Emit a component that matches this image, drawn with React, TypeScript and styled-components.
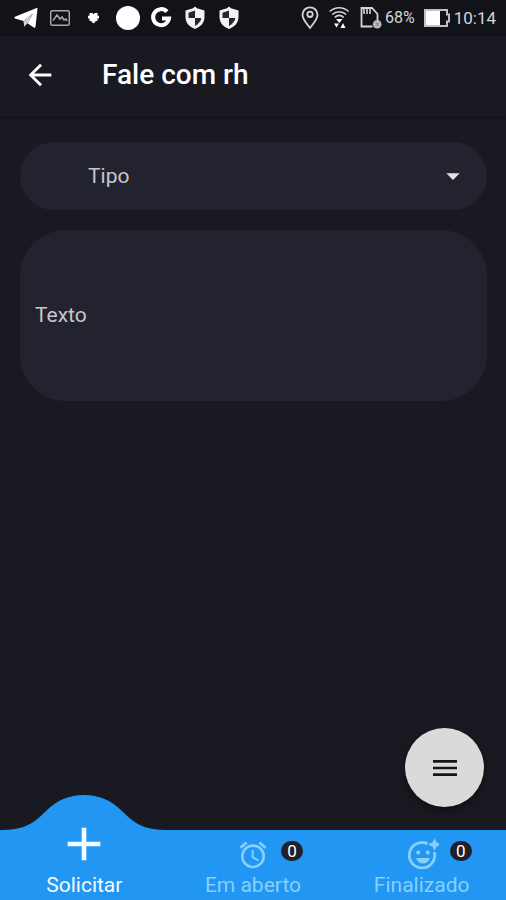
import React, { useState } from "react";
import styled, { createGlobalStyle } from "styled-components";
import { MdAdd, MdAlarm, MdArrowBack, MdArrowDropDown, MdMenu } from "react-icons/md";

const colors = {
  page: "#191922",
  status: "#121219",
  field: "#23232f",
  hint: "#c6c6cc",
  blue: "#2196f3",
  idle: "#86d0fb",
  active: "#f4fbff",
  fab: "#dadada",
};

const GlobalStyle = createGlobalStyle`
  *, *::before, *::after { box-sizing: border-box; }
  body { margin: 0; background: ${colors.page}; font-family: Roboto, "Liberation Sans", sans-serif; }
  button, select, textarea { font: inherit; border: 0; margin: 0; }
`;

const Screen = styled.div`
  min-height: 100vh;
  display: flex;
  flex-direction: column;
  background: ${colors.page};
`;

const StatusBar = styled.div`
  height: 36px;
  padding: 0 10px 0 14px;
  display: flex;
  align-items: center;
  justify-content: space-between;
  background: ${colors.status};
  color: #fff;
`;

const Notifications = styled.div`
  display: flex;
  align-items: center;
  gap: 10px;

  > svg { display: block; width: 24px; height: 24px; }
`;

const SystemInfo = styled.div`
  display: flex;
  align-items: center;
  color: #d4d4d8;
  font-size: 16px;
  line-height: 20px;

  > svg { display: block; flex: none; }
`;

const Percent = styled.span`
  margin: 0 9px 0 3px;
`;

const Clock = styled.time`
  margin-left: 4px;
  font-size: 17px;
`;

const PinSlot = styled.svg`
  margin-right: 8px;
`;

const WifiSlot = styled.svg`
  margin-right: 9px;
`;

const Header = styled.header`
  height: 80px;
  padding: 0 20px 2px;
  display: flex;
  align-items: center;
  gap: 42px;
  background: ${colors.page};
  box-shadow: 0 2px 5px rgba(0, 0, 0, 0.3);
`;

const BackButton = styled.button`
  width: 40px;
  height: 40px;
  padding: 0;
  display: grid;
  place-items: center;
  background: none;
  color: #fff;
  font-size: 34px;
`;

const Title = styled.h1`
  margin: 0;
  color: #fff;
  font-size: 28px;
  font-weight: 500;
  line-height: 36px;
`;

const Form = styled.form`
  flex: 1;
  padding: 26px 19px 24px 20px;
  display: flex;
  flex-direction: column;
  gap: 20px;
`;

const SelectField = styled.div`
  display: grid;
  align-items: center;
  color: #e2e2e4;

  > select, > svg { grid-area: 1 / 1; }
  > svg { justify-self: end; margin-right: 18px; pointer-events: none; }
`;

const Select = styled.select`
  width: 100%;
  height: 68px;
  padding: 0 60px 0 68px;
  appearance: none;
  border-radius: 34px;
  background: ${colors.field};
  color: ${colors.hint};
  font-size: 21px;
`;

const TextArea = styled.textarea`
  width: 100%;
  height: 171px;
  padding: 72px 15px 12px;
  resize: none;
  border-radius: 46px;
  background: ${colors.field};
  color: ${colors.hint};
  font-size: 21px;
  line-height: 26px;

  &::placeholder { color: ${colors.hint}; opacity: 1; }
`;

const Fab = styled.button`
  align-self: flex-end;
  width: 79px;
  height: 79px;
  margin: 0 22px 23px 0;
  padding: 0;
  display: grid;
  place-items: center;
  border-radius: 50%;
  background: ${colors.fab};
  color: #151518;
  font-size: 32px;
  box-shadow: 0 3px 7px rgba(0, 0, 0, 0.5);
`;

const TabBar = styled.nav`
  display: grid;
  grid-template-columns: repeat(3, 1fr);
  height: 70px;
  background: ${colors.blue};
`;

const Tab = styled.button<{ $active: boolean }>`
  position: relative;
  padding: 0 0 3px;
  display: flex;
  flex-direction: column;
  align-items: center;
  justify-content: flex-end;
  background: none;
  color: ${({ $active }) => ($active ? colors.active : colors.idle)};
  font-size: 21px;
  line-height: 24px;
`;

const Hump = styled.svg`
  position: absolute;
  left: 50%;
  bottom: 100%;
  width: 168px;
  height: 36px;
  margin: 0 0 -1px -84px;
  display: block;
`;

const TabIcon = styled.span<{ $large?: boolean }>`
  position: relative;
  display: grid;
  place-items: center;
  width: 56px;
  height: ${({ $large }) => ($large ? 56 : 34)}px;
  margin-top: ${({ $large }) => ($large ? -14 : 0)}px;
  font-size: ${({ $large }) => ($large ? 56 : 32)}px;
  margin-bottom: 1px;
`;

const Badge = styled.span`
  position: absolute;
  left: 56px;
  top: 3px;
  width: 22px;
  height: 20px;
  border-radius: 10px;
  background: #20202c;
  color: #fff;
  font-size: 17px;
  line-height: 20px;
  text-align: center;
`;

const TelegramIcon = () => (
  <svg viewBox="0 0 24 24" fill="#fff">
    <path d="M23.500 2.500 21.500 20.500c-.2 1.400-1.200 1.500-2.200.8L13.500 17.300 19 7.500 9.500 15 1 12.500C0 12.200 0 11.200 1 10.800L22 2.300c1-.4 1.600-.3 1.500.2Z" />
    <path d="M9.500 15 19 7.500 13.500 17.300 10.200 20.800Z" fill="#d0d0d4" />
  </svg>
);

const PictureIcon = () => (
  <svg viewBox="0 0 24 24" fill="none" stroke="#a9a9ad" strokeWidth="1.500">
    <rect x="2.700" y="4.700" width="18.600" height="14.600" rx="1.600" />
    <path d="M5 14.500 9 9l3 4 2-2 2 3 2-1 1 2" />
  </svg>
);

const PuzzleIcon = () => (
  <svg viewBox="0 0 24 24" fill="#fff">
    <path d="M7.500 7h3l1 1.500L12.500 7h3v2.800H17v2.700h-1.500v2.500h-1.500L11.500 17.500 9 15H7.500v-2.500H6V9.800h1.500Z" />
  </svg>
);

const DiscIcon = () => (
  <svg viewBox="0 0 24 24">
    <circle cx="12" cy="12" r="12" fill="#fff" />
  </svg>
);

const GIcon = () => (
  <svg viewBox="0 0 24 24" fill="none" stroke="#fff" strokeWidth="4">
    <path d="M17 5.700A8 8 0 1 0 19 12.500h-7" />
  </svg>
);

const ShieldIcon = () => (
  <svg viewBox="0 0 24 24">
    <path d="M11 .5 13 2.200 20.500 4.500V11c0 5.800-3.800 9.900-9.500 12C5.300 20.900 1.500 16.800 1.500 11V4.500L9 2.200Z" fill="#f2f2f2" />
    <path d="M11 4.500V12H4.500V6.700ZM11 12h6.300c-.5 3.500-2.900 6.200-6.300 7.900Z" fill="#26262e" />
  </svg>
);

const PinIcon = () => (
  <PinSlot width="20" height="24" viewBox="0 0 20 24" fill="none" stroke="currentColor" strokeWidth="1.800">
    <path d="M9 22C5.800 17.800 1.500 13.400 1.500 8.800a7.500 7.500 0 0 1 15 0C16.500 13.400 12.200 17.800 9 22Z" />
    <circle cx="9" cy="8.300" r="2.700" />
  </PinSlot>
);

const WifiIcon = () => (
  <WifiSlot width="22" height="24" viewBox="0 0 22 24" fill="none" stroke="currentColor" strokeWidth="1.600">
    <path d="M.7 5.500C6.200.5 14.200.5 19.700 5.500M3.200 8.500C7.200 4.800 13.200 4.800 17.200 8.500M5.700 11.300c2.700-2.400 6.300-2.400 9 0" />
    <path d="M7 13h6.500l-3.200 4ZM5 17.500h5l-2.500 4ZM14 17l2.500 5h-5Z" fill="#fff" stroke="none" />
  </WifiSlot>
);

const SimIcon = () => (
  <svg width="22" height="24" viewBox="0 0 22 24" fill="none" stroke="currentColor" strokeWidth="1.800">
    <path d="M12.500 20.500H1.500V2h10.500l5.500 6v6" />
    <path d="M4 2v6M7 2v6M10 2v6" strokeWidth="1.600" />
    <circle cx="17.200" cy="18.200" r="4.300" fill="#b9b9be" stroke="none" />
    <path d="m15.500 16.500 3.400 3.400m0-3.400-3.400 3.400" stroke="#7c7c84" strokeWidth="1" />
  </svg>
);

const BatteryIcon = () => (
  <svg width="26" height="18" viewBox="0 0 26 18">
    <path d="M1 1h22v4.500h2v7h-2V17H1Z" fill="none" stroke="#c0c0c5" strokeWidth="2" />
    <path d="M2 2H16v14H2Z" fill="#fff" />
  </svg>
);

const ReactionIcon = () => (
  <svg width="34" height="34" viewBox="0 0 34 34" fill="none" stroke="currentColor" strokeWidth="2.800">
    <path d="M22.500 5.800A12.700 12.700 0 1 0 29.300 14" />
    <path d="M11 20h14c-1 3.500-3.600 5.500-7 5.500s-6-2-7-5.500Z" fill="currentColor" stroke="none" />
    <circle cx="13.300" cy="14.500" r="2.100" fill="currentColor" stroke="none" />
    <circle cx="22.700" cy="14.500" r="2.100" fill="currentColor" stroke="none" />
    <path d="m29.500 2 1.500 3 3 1.500-3 1.500-1.500 3-1.500-3-3-1.500 3-1.500Z" fill="currentColor" strokeWidth="1.600" />
  </svg>
);

const tabs = [
  { label: "Solicitar", icon: <MdAdd /> },
  { label: "Em aberto", icon: <MdAlarm />, count: 0 },
  { label: "Finalizado", icon: <ReactionIcon />, count: 0 },
];

export default function App() {
  const [active, setActive] = useState(0);
  const [text, setText] = useState("");

  return (
    <Screen>
      <GlobalStyle />
      <StatusBar>
        <Notifications>
          <TelegramIcon />
          <PictureIcon />
          <PuzzleIcon />
          <DiscIcon />
          <GIcon />
          <ShieldIcon />
          <ShieldIcon />
        </Notifications>
        <SystemInfo>
          <PinIcon />
          <WifiIcon />
          <SimIcon />
          <Percent>68%</Percent>
          <BatteryIcon />
          <Clock>10:14</Clock>
        </SystemInfo>
      </StatusBar>
      <Header>
        <BackButton type="button" aria-label="Voltar">
          <MdArrowBack />
        </BackButton>
        <Title>Fale com rh</Title>
      </Header>
      <Form>
        <SelectField>
          <Select aria-label="Tipo" defaultValue="">
            <option value="">Tipo</option>
          </Select>
          <MdArrowDropDown size={32} />
        </SelectField>
        <TextArea
          aria-label="Texto"
          placeholder="Texto"
          value={text}
          onChange={(e) => setText(e.target.value)}
        />
      </Form>
      <Fab type="button" aria-label="Menu">
        <MdMenu />
      </Fab>
      <TabBar>
        {tabs.map((tab, index) => (
          <Tab key={tab.label} type="button" $active={index === active} onClick={() => setActive(index)}>
            {index === active && (
              <Hump viewBox="0 0 168 36" aria-hidden="true">
                <path d="M0 36V35C22 35 32 30 45 17C57 5 69 0 84 0C99 0 111 5 123 17C136 30 146 35 168 35V36Z" fill={colors.blue} />
              </Hump>
            )}
            <TabIcon $large={index === active}>
              {tab.icon}
              {tab.count !== undefined && <Badge>{tab.count}</Badge>}
            </TabIcon>
            {tab.label}
          </Tab>
        ))}
      </TabBar>
    </Screen>
  );
}
